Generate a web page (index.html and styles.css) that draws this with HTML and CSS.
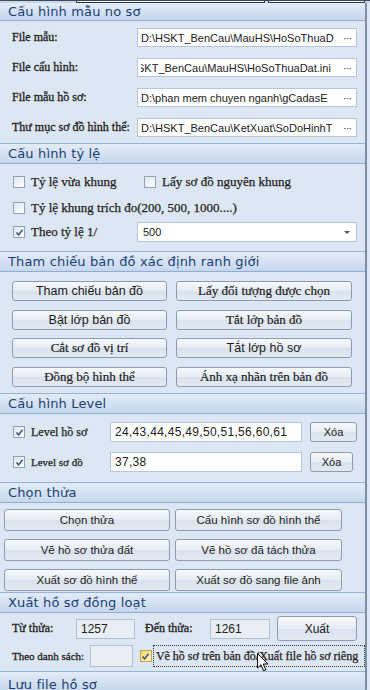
FILE: index.html
```html
<!DOCTYPE html>
<html>
<head>
<meta charset="utf-8">
<link rel="stylesheet" href="styles.css">
</head>
<body>
<div class="topstrip"><span class="tabend te1"></span><span class="tabend te2"></span></div>
<div class="panel">
  <div class="hdr h1">Cấu hình mẫu no sơ</div>
  <div class="sec s1">
    <div class="frow"><span class="lbl">File mẫu:</span><div class="path"><div class="pclip"><span class="ptxt">D:\HSKT_BenCau\MauHS\HoSoThuaD</span></div><span class="dots">···</span></div></div>
    <div class="frow"><span class="lbl">File cấu hình:</span><div class="path"><div class="pclip"><span class="ptxt shift">SKT_BenCau\MauHS\HoSoThuaDat.ini</span></div><span class="dots">···</span></div></div>
    <div class="frow"><span class="lbl">File mẫu hồ sơ:</span><div class="path"><div class="pclip"><span class="ptxt">D:\phan mem chuyen nganh\gCadasE</span></div><span class="dots">···</span></div></div>
    <div class="frow"><span class="lbl">Thư mục sơ đồ hình thể:</span><div class="path"><div class="pclip"><span class="ptxt">D:\HSKT_BenCau\KetXuat\SoDoHinhT</span></div><span class="dots">···</span></div></div>
  </div>

  <div class="hdr h2">Cấu hình tỷ lệ</div>
  <div class="sec s2">
    <div class="crow r1">
      <label class="chk w1"><span class="box"></span><span class="ctext">Tỷ lệ vừa khung</span></label>
      <label class="chk"><span class="box"></span><span class="ctext">Lấy sơ đồ nguyên khung</span></label>
    </div>
    <div class="crow r2">
      <label class="chk"><span class="box"></span><span class="ctext">Tỷ lệ khung trích đo(200, 500, 1000....)</span></label>
    </div>
    <div class="crow r3">
      <label class="chk w2"><span class="box on"><svg viewBox="0 0 9 9" width="9" height="9"><path d="M1.5 4.5 L3.6 6.8 L7.6 1.8" fill="none" stroke="#3a4f73" stroke-width="1.4"/></svg></span><span class="ctext">Theo tỷ lệ 1/</span></label>
      <div class="sel"><span class="stext">500</span><span class="arrow"></span></div>
    </div>
  </div>

  <div class="hdr h3">Tham chiếu bản đồ xác định ranh giới</div>
  <div class="sec s3">
    <div class="brow"><button class="btn bl sans">Tham chiếu bản đồ</button><button class="btn br serif">Lấy đối tượng được chọn</button></div>
    <div class="brow"><button class="btn bl sans">Bật lớp bản đồ</button><button class="btn br serif">Tắt lớp bản đồ</button></div>
    <div class="brow"><button class="btn bl serif">Cắt sơ đồ vị trí</button><button class="btn br sans">Tắt lớp hồ sơ</button></div>
    <div class="brow"><button class="btn bl serif">Đồng bộ hình thể</button><button class="btn br serif">Ánh xạ nhãn trên bản đồ</button></div>
  </div>

  <div class="hdr h4">Cấu hình Level</div>
  <div class="sec s4">
    <div class="lrow">
      <label class="chk lw"><span class="box on"><svg viewBox="0 0 9 9" width="9" height="9"><path d="M1.5 4.5 L3.6 6.8 L7.6 1.8" fill="none" stroke="#3a4f73" stroke-width="1.4"/></svg></span><span class="ctext lv">Level hồ sơ</span></label>
      <div class="inp lin">24,43,44,45,49,50,51,56,60,61</div>
      <button class="btn xoa">Xóa</button>
    </div>
    <div class="lrow">
      <label class="chk lw"><span class="box on"><svg viewBox="0 0 9 9" width="9" height="9"><path d="M1.5 4.5 L3.6 6.8 L7.6 1.8" fill="none" stroke="#3a4f73" stroke-width="1.4"/></svg></span><span class="ctext lv small">Level sơ đồ</span></label>
      <div class="inp lin">37,38</div>
      <button class="btn xoa x2">Xóa</button>
    </div>
  </div>

  <div class="hdr h5">Chọn thửa</div>
  <div class="sec s5">
    <div class="brow2"><button class="btn cl">Chọn thửa</button><button class="btn cr">Cấu hình sơ đồ hình thể</button></div>
    <div class="brow2"><button class="btn cl">Vẽ hồ sơ thửa đất</button><button class="btn cr">Vẽ hồ sơ đã tách thửa</button></div>
    <div class="brow2"><button class="btn cl">Xuất sơ đồ hình thể</button><button class="btn cr">Xuất sơ đồ sang file ảnh</button></div>
  </div>

  <div class="hdr h6">Xuất hồ sơ đồng loạt</div>
  <div class="sec s6">
    <div class="xrow1">
      <span class="lbl tu">Từ thửa:</span>
      <div class="inp grey n1">1257</div>
      <span class="lbl den">Đến thửa:</span>
      <div class="inp grey n2">1261</div>
      <button class="btn xuat">Xuất</button>
    </div>
    <div class="xrow2">
      <span class="lbl theo">Theo danh sách:</span>
      <div class="inp grey n3"></div>
      <span class="box hot"><svg viewBox="0 0 9 9" width="9" height="9"><path d="M1.5 4.5 L3.6 6.8 L7.6 1.8" fill="none" stroke="#3a4f73" stroke-width="1.4"/></svg></span>
      <span class="focus">Vẽ hồ sơ trên bản đồ/Xuất file hồ sơ riêng</span>
      <svg class="cursor" viewBox="0 0 12 19" width="12" height="19"><path d="M0.5 0.5 L0.5 15 L4 11.8 L6.6 17.8 L8.8 16.8 L6.3 11 L11 11 Z" fill="#fff" stroke="#000" stroke-width="1"/></svg>
    </div>
  </div>

  <div class="hdr h7">Lưu file hồ sơ</div>
</div>
</body>
</html>
```

FILE: styles.css
```css
* { box-sizing: border-box; }
html, body { margin: 0; padding: 0; }
body {
  width: 370px;
  height: 690px;
  overflow: hidden;
  background: #dde7f3;
  font-family: "Liberation Sans", Arial, sans-serif;
}
.topstrip {
  height: 3px;
  background: #c9d5e4;
  border-top: 1px solid #3d4b5e;
  display: flex;
  padding-left: 76px;
  gap: 3px;
}
.tabend {
  height: 2px;
  background: #f4f6f9;
  border: 1px solid #2f3946;
  border-top: 0;
}
.te1 { width: 189px; }
.te2 { width: 97px; }
.panel {
  width: 367px;
  background: #dde7f3;
  border-right: 2px solid #7b8da6;
  height: 687px;
  overflow: hidden;
}
.hdr {
  height: 21px;
  padding-left: 8px;
  display: flex;
  align-items: center;
  font-family: "DejaVu Sans", sans-serif;
  font-size: 13px;
  letter-spacing: 0.15px;
  color: #1a3e78;
  background: linear-gradient(#e3ecf7, #c6d7ed);
  border-top: 1px solid #95b3d9;
  border-bottom: 1px solid #8eacd4;
  white-space: nowrap;
}
.h1 { height: 18px; border-top: 0; }
.sec { display: flex; flex-direction: column; }
.lbl {
  font-family: "Liberation Serif", "Times New Roman", serif;
  font-size: 12px;
  -webkit-text-stroke: 0.3px #1d1d1d;
  color: #1d1d1d;
  white-space: nowrap;
}
/* section 1 */
.s1 { height: 122px; padding: 7px 0 0 12px; gap: 11px; }
.frow { height: 19px; display: flex; align-items: center; }
.frow .lbl { width: 125px; flex-shrink: 0; }
.path {
  width: 220px;
  height: 19px;
  background: #fff;
  border: 1px solid #b5c6dc;
  display: flex;
  align-items: center;
  padding-left: 3px;
}
.pclip { flex: 1; overflow: hidden; display: flex; white-space: nowrap; }
.ptxt { flex-shrink: 0; font-size: 11px; color: #222; }
.ptxt.shift { margin-left: -4px; }
.dots { width: 18px; text-align: center; font-size: 11px; color: #333; flex-shrink: 0; letter-spacing: -1px; }

/* checkboxes */
.chk { display: flex; align-items: center; }
.box {
  width: 12px; height: 12px;
  border: 1px solid #8fa3bf;
  background: linear-gradient(135deg, #dfe5ec, #ffffff);
  display: inline-flex; align-items: center; justify-content: center;
  flex-shrink: 0;
}
.ctext {
  margin-left: 6px;
  font-family: "Liberation Serif", "Times New Roman", serif;
  font-size: 13px;
  -webkit-text-stroke: 0.25px #222;
  color: #222;
  white-space: nowrap;
}
.ctext.lv { font-size: 12px; }
.ctext.small { font-size: 11px; }

.s2 { height: 87px; padding: 11px 0 0 13px; }
.crow { display: flex; align-items: center; }
.r1 { height: 13px; }
.r2 { height: 13px; margin-top: 13px; }
.r3 { height: 20px; margin-top: 8px; }
.w1 { width: 131px; }
.w2 { width: 124px; }
.sel {
  width: 220px; height: 20px;
  background: #fff;
  border: 1px solid #b5c6dc;
  display: flex; align-items: center;
  padding-left: 5px;
  font-size: 11px; color: #222;
}
.stext { flex: 1; }
.arrow {
  width: 0; height: 0;
  border-left: 3px solid transparent;
  border-right: 3px solid transparent;
  border-top: 3px solid #555;
  margin-right: 6px;
}

/* buttons */
.btn {
  margin: 0;
  padding: 0;
  border: 1px solid #8b9bb2;
  border-radius: 3px;
  background: linear-gradient(#f7f9fc, #e6ecf4 50%, #d9e2ee 51%, #e4eaf2);
  color: #1b1b1b;
  font-family: "Liberation Sans", Arial, sans-serif;
  font-size: 11.5px;
  height: 20px;
  white-space: nowrap;
}
.btn.sans { font-size: 12.5px; }
.btn.serif { font-family: "Liberation Serif", "Times New Roman", serif; font-size: 13px; -webkit-text-stroke: 0.2px #1b1b1b; }
.s3 { height: 121px; padding: 9px 0 0 12px; gap: 8.5px; }
.brow { display: flex; gap: 9px; }
.bl { width: 155px; }
.br { width: 176px; }

/* level */
.s4 { height: 68px; padding: 8px 0 0 13px; gap: 10px; }
.lrow { display: flex; align-items: center; height: 20px; }
.lw { width: 97px; }
.inp {
  height: 20px;
  background: #fff;
  border: 1px solid #b5c6dc;
  font-size: 12px;
  color: #222;
  display: flex; align-items: center;
  padding-left: 4px;
}
.lin { width: 192px; letter-spacing: 0.3px; }
.xoa { width: 47px; height: 20px; margin-left: 8px; font-size: 11px; }
.xoa.x2 { width: 43px; }

/* chon thua */
.s5 { height: 89px; padding: 6px 0 0 4px; gap: 8px; }
.brow2 { display: flex; gap: 5px; }
.brow2 .btn { height: 22px; font-size: 11.5px; }
.cl { width: 166px; }
.cr { width: 167px; }

/* xuat */
.s6 { height: 58px; padding: 3px 0 0 12px; position: relative; }
.xrow1 { display: flex; align-items: center; height: 25px; }
.tu { width: 64px; }
.grey { background: #e9eef4; border-color: #b0bfd2; }
.n1 { width: 59px; }
.den { margin-left: 10px; width: 65px; }
.n2 { width: 60px; }
.xuat { width: 80px; height: 25px; margin-left: 7px; font-size: 12px; }
.xrow2 { display: flex; align-items: center; height: 24px; margin-top: 3px; }
.theo { width: 79px; font-size: 11px; }
.n3 { width: 44px; height: 22px; }
.box.hot {
  margin-left: 7px;
  background: linear-gradient(135deg, #f7d774, #fff3c2);
  border-color: #c6a342;
}
.focus {
  margin-left: 1px;
  height: 22px;
  width: 216px;
  border: 1px dotted #333;
  display: flex; align-items: center;
  padding-left: 2px;
  font-family: "Liberation Serif", "Times New Roman", serif;
  font-size: 12px;
  -webkit-text-stroke: 0.25px #222;
  color: #222;
  white-space: nowrap;
  overflow: hidden;
}
.cursor { position: absolute; left: 257px; top: 40px; }
.h7 { align-items: flex-start; padding-top: 5px; }
```
